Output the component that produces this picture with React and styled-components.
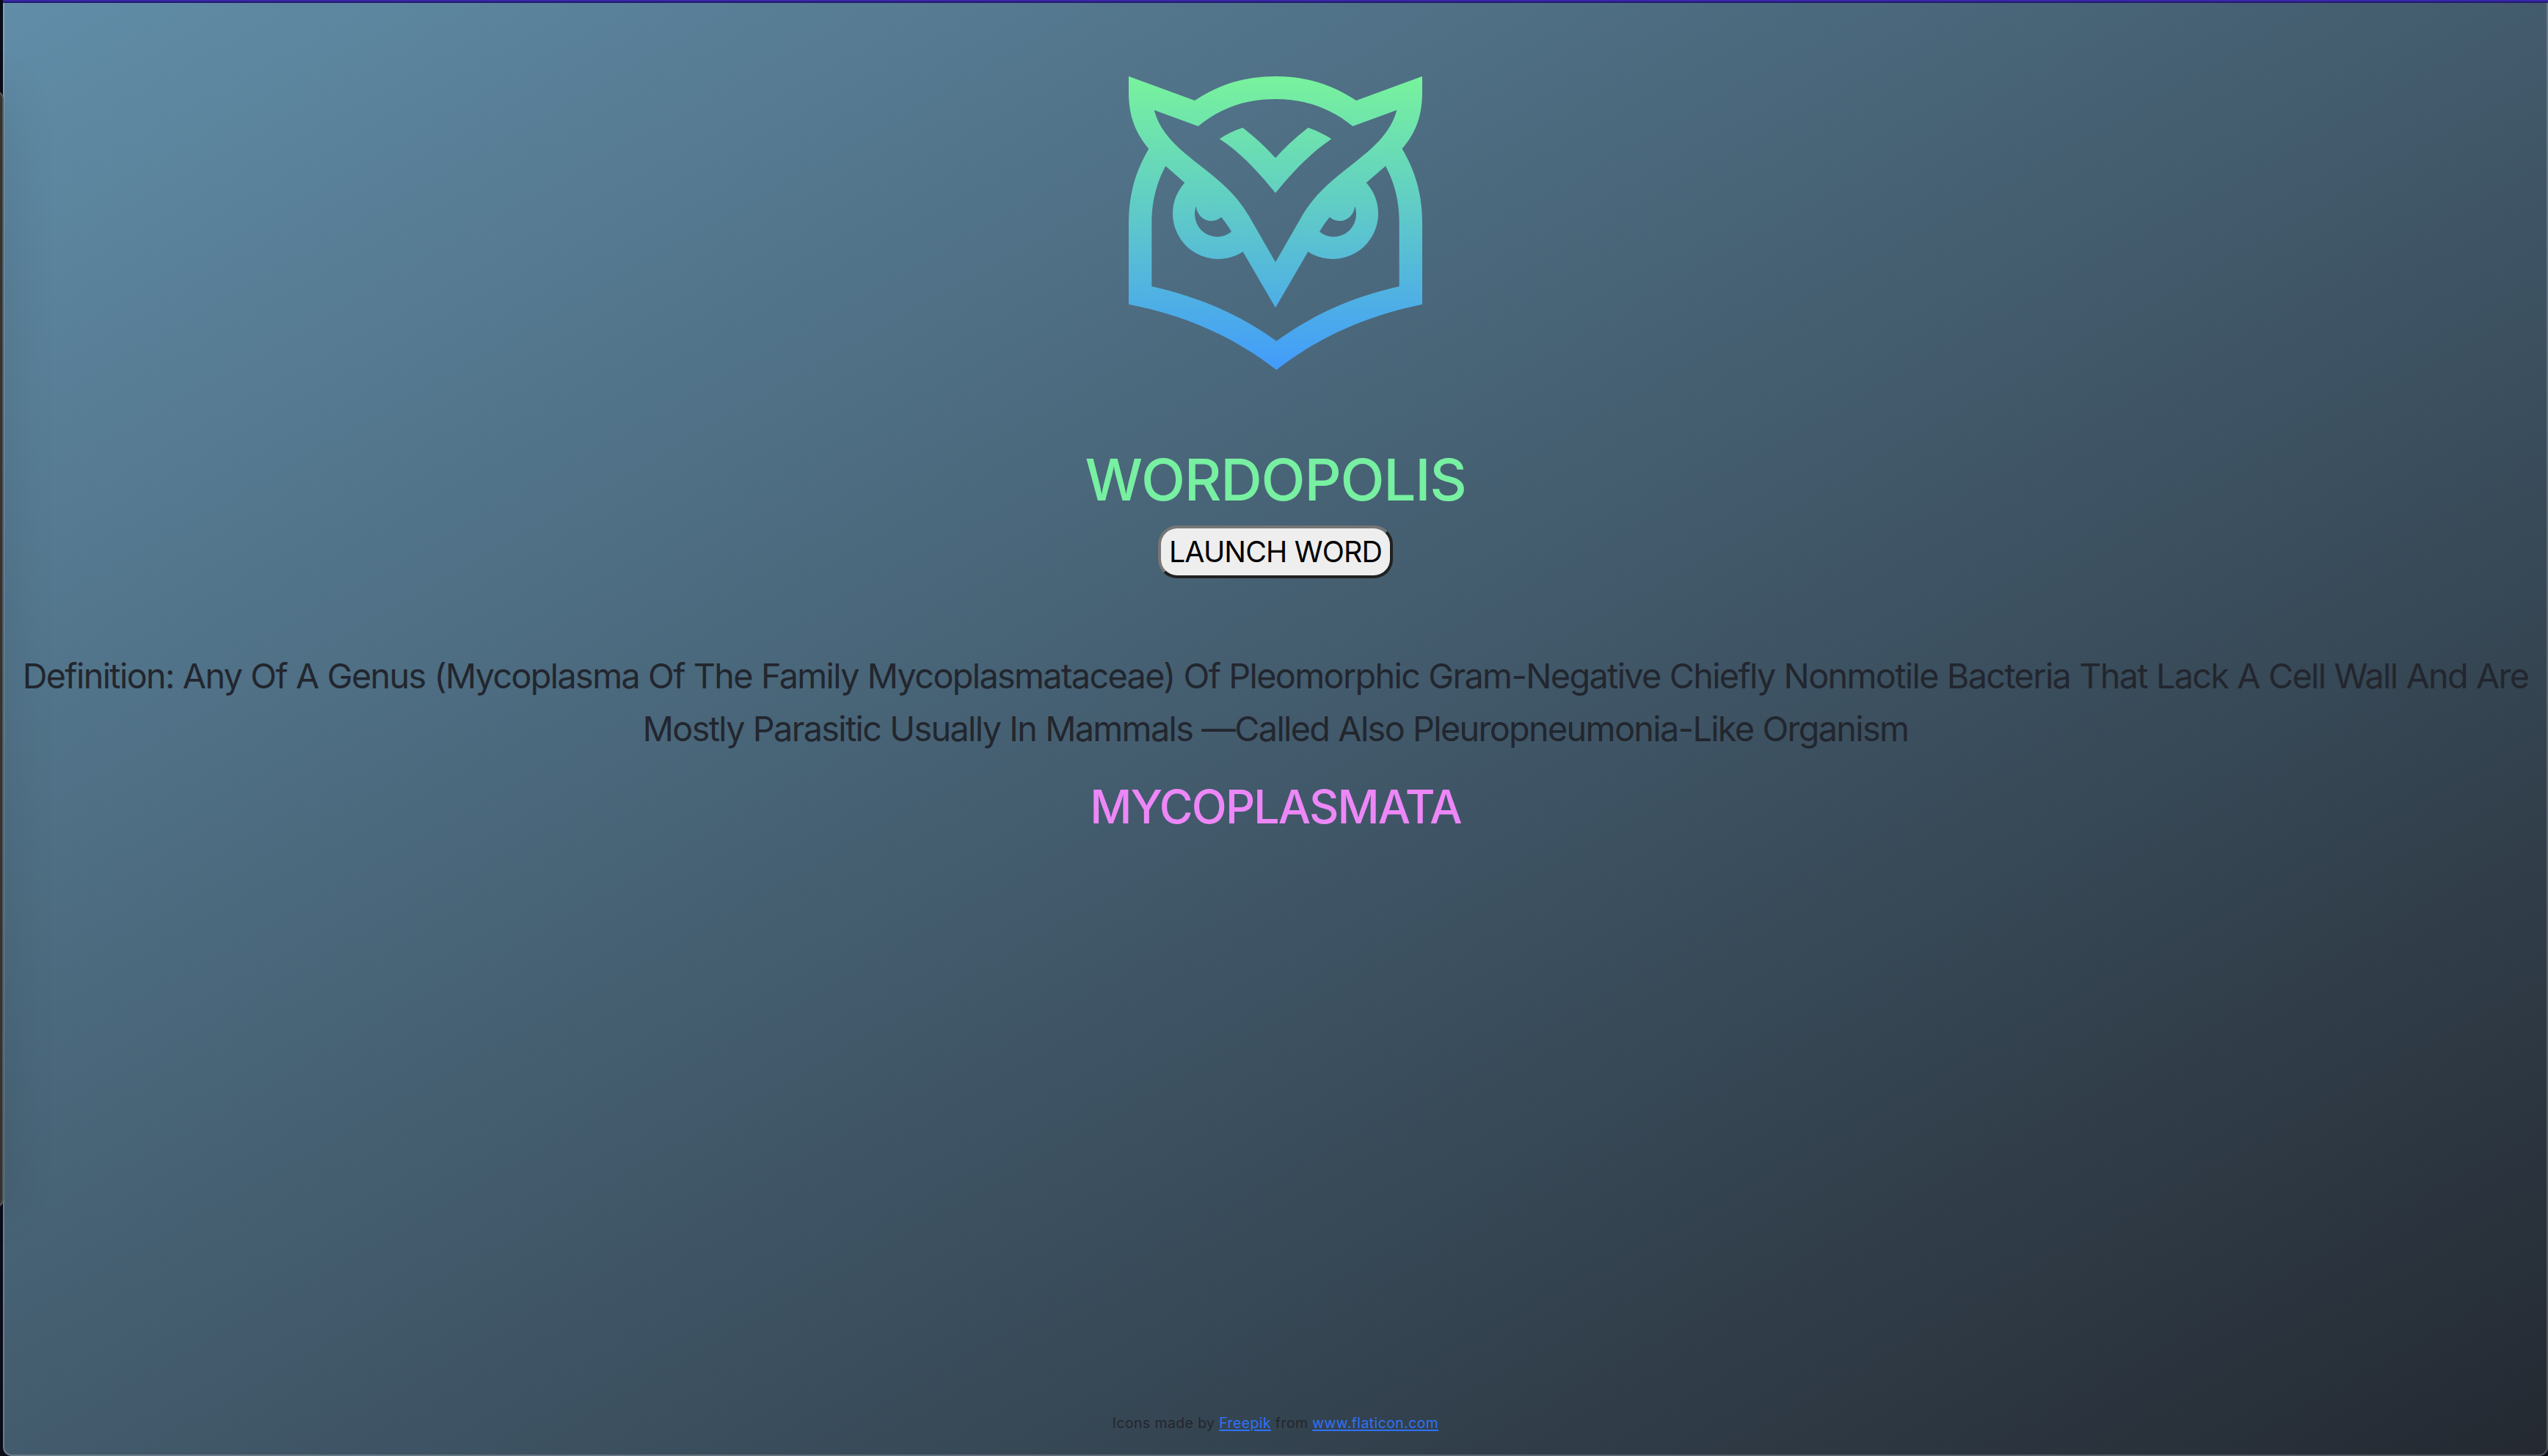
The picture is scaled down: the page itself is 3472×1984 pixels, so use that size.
import React from "react";
import styled, { createGlobalStyle } from "styled-components";

const GlobalStyle = createGlobalStyle`
  html, body { margin: 0; padding: 0; background: #0a0c18; }
  *, *::before, *::after { box-sizing: border-box; }
`;

const Desktop = styled.div`
  position: relative;
  display: flex;
  flex-direction: column;
  width: 100%;
  height: 100vh;
  overflow: hidden;
  padding-left: 4px;
  background: #0a0c18;
  font-family: Inter, "Liberation Sans", sans-serif;
  color: #22262e;
`;

const BrowserEdge = styled.div`
  flex: none;
  height: 4px;
  background: linear-gradient(#3827a6 50%, #241a70 50%);
`;

const BackgroundWindow = styled.div`
  position: absolute;
  top: 123px;
  left: -40px;
  width: 45px;
  height: 1523px;
  border: 2px solid #565656;
  border-radius: 12px;
  background: #333333;
  box-shadow: 0 0 70px rgba(0, 0, 0, 0.14);
`;

const Page = styled.main`
  flex: 1;
  display: flex;
  flex-direction: column;
  align-items: center;
  padding: 100px 12px 28px;
  border: 2px solid rgba(255, 255, 255, 0.2);
  border-top: 0;
  border-radius: 0 0 12px 12px;
  background: linear-gradient(to bottom right, #618da8, #242931) border-box;
`;

const Logo = styled.svg`
  flex: none;
  width: 400px;
  height: 400px;
  margin-bottom: 102px;
`;

const Title = styled.h1`
  margin: 0 0 14px;
  font-size: 78.4px;
  font-weight: 525;
  line-height: 96px;
  letter-spacing: -1.3px;
  color: #77f0a1;
`;

const LaunchButton = styled.button`
  flex: none;
  width: 320px;
  height: 72px;
  padding: 0;
  border: 4px solid;
  border-color: #767676 #212121 #212121 #767676;
  border-radius: 26px;
  background: #eeeeee;
  color: #000;
  font: 400 39.4px/60px Inter, "Liberation Sans", sans-serif;
  letter-spacing: -0.85px;
  white-space: nowrap;
`;

const Definition = styled.p`
  margin: 97px 0 32px;
  font-size: 46.75px;
  line-height: 72px;
  letter-spacing: -1.65px;
  word-spacing: 0.5px;
  text-align: center;
  text-transform: capitalize;
`;

const Word = styled.h2`
  margin: 0;
  font-size: 62.6px;
  font-weight: 525;
  line-height: 76px;
  letter-spacing: -1.9px;
  color: #ed87f7;
`;

const Credits = styled.footer`
  margin-top: auto;
  font-size: 19.4px;
  line-height: 30px;
  letter-spacing: 0.43px;
`;

const CreditLink = styled.a`
  color: #2e73f8;
  text-decoration: underline;
  text-decoration-thickness: 2px;
  text-underline-offset: 2px;
`;

const OwlLogo = () => (
  <Logo viewBox="54 42 1200 1200" aria-hidden="true">
    <defs>
      <linearGradient id="owl" x1="0" y1="0" x2="0" y2="1">
        <stop offset="0" stopColor="#78f39c" />
        <stop offset="1" stopColor="#429bfb" />
      </linearGradient>
    </defs>
    <path
      fill="url(#owl)"
      fillRule="evenodd"
      d="M54 42 L324 141 C424 74 532 42 654 42 C776 42 884 74 984 141 L1254 42 V105
         C1254 210 1225 275 1172 338 C1226 430 1254 525 1254 640 V974
         C1022 1022 826 1110 658 1242 C490 1110 286 1018 54 974 V640
         C54 525 82 430 136 338 C84 275 54 210 54 105 Z
         M158 180 L338 246 C430 170 535 135 654 135 C773 135 878 170 970 246 L1150 180
         C1123 280 1046 340 968 402 C893 462 823 512 763 612 L654 802 L545 612
         C485 512 415 462 340 402 C262 340 185 280 158 180 Z
         M205 409 L283 477 A186 186 0 0 0 521 759 L654 988 L787 759
         A186 186 0 0 0 1025 477 L1104 409 C1142 480 1160 555 1160 640 V901
         C970 943 810 1015 658 1124 C506 1015 338 943 148 901 V640
         C148 555 167 480 205 409 Z
         M329 572 C333 608 360 633 390 633 C407 633 420 628 432 617
         C448 636 462 656 474 677 C456 691 437 698 416 698
         A92 92 0 0 1 324 606 C324 594 326 583 329 572 Z
         M979 572 C975 608 948 633 918 633 C901 633 888 628 876 617
         C860 636 846 656 834 677 C852 691 871 698 892 698
         A92 92 0 0 0 984 606 C984 594 982 583 979 572 Z
         M425 298 Q470 268 520 252 C570 290 613 331 654 376
         C695 331 738 290 788 252 Q835 268 883 298
         C795 358 725 432 654 519 C583 432 513 355 425 298 Z"
    />
  </Logo>
);

export default function App() {
  return (
    <>
      <GlobalStyle />
      <Desktop>
        <BrowserEdge />
        <Page>
          <OwlLogo />
          <Title>WORDOPOLIS</Title>
          <LaunchButton type="button">LAUNCH WORD</LaunchButton>
          <Definition>
            Definition: Any Of A Genus (Mycoplasma Of The Family Mycoplasmataceae) Of Pleomorphic
            Gram-Negative Chiefly Nonmotile Bacteria That Lack A Cell Wall And Are Mostly Parasitic
            Usually In Mammals —Called Also Pleuropneumonia-Like Organism
          </Definition>
          <Word>MYCOPLASMATA</Word>
          <Credits>
            Icons made by <CreditLink href="#freepik">Freepik</CreditLink> from{" "}
            <CreditLink href="#flaticon">www.flaticon.com</CreditLink>
          </Credits>
        </Page>
        <BackgroundWindow />
      </Desktop>
    </>
  );
}
